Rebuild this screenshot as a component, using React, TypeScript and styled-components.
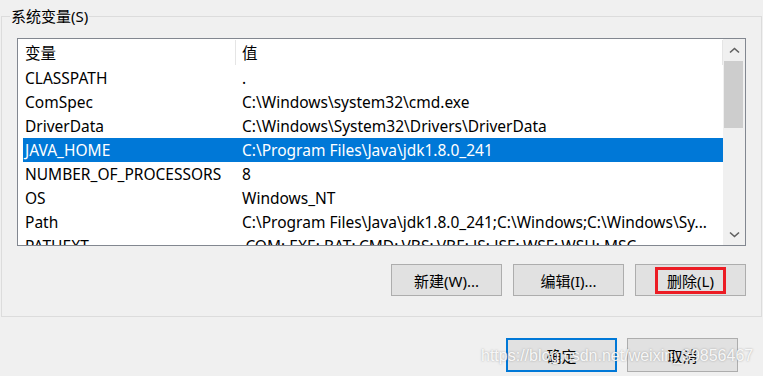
import styled, { createGlobalStyle } from 'styled-components';

const GlobalStyle = createGlobalStyle`
  html, body {
    margin: 0;
    padding: 0;
    background: #f0f0f0;
  }
  body {
    font-family: "Noto Sans", "Noto Sans CJK SC", sans-serif;
    color: #000;
  }
`;

const rows = [
  { name: 'CLASSPATH', value: '.' },
  { name: 'ComSpec', value: 'C:\\Windows\\system32\\cmd.exe' },
  { name: 'DriverData', value: 'C:\\Windows\\System32\\Drivers\\DriverData' },
  { name: 'JAVA_HOME', value: 'C:\\Program Files\\Java\\jdk1.8.0_241', selected: true },
  { name: 'NUMBER_OF_PROCESSORS', value: '8' },
  { name: 'OS', value: 'Windows_NT' },
  { name: 'Path', value: 'C:\\Program Files\\Java\\jdk1.8.0_241;C:\\Windows;C:\\Windows\\Sy...' },
  { name: 'PATHEXT', value: '.COM;.EXE;.BAT;.CMD;.VBS;.VBE;.JS;.JSE;.WSF;.WSH;.MSC' },
];

const Chevron = ({ down }: { down?: boolean }) => (
  <svg width="11" height="7" viewBox="0 0 11 7">
    <path
      d={down ? 'M1 1.5 L5.5 5.5 L10 1.5' : 'M1 5.5 L5.5 1.5 L10 5.5'}
      fill="none"
      stroke="#606060"
      strokeWidth="1.6"
    />
  </svg>
);

const App = () => (
  <>
    <GlobalStyle />
    <Window>
      <GroupBox>
        <Legend>系统变量(S)</Legend>
        <ListBox>
          <ListBody>
            <HeaderRow>
              <HeaderCell>变量</HeaderCell>
              <HeaderCell $second>值</HeaderCell>
            </HeaderRow>
            {rows.map((r) => (
              <Row key={r.name} $selected={!!r.selected}>
                <Cell>{r.name}</Cell>
                <Cell>{r.value}</Cell>
              </Row>
            ))}
          </ListBody>
          <Scrollbar>
            <ArrowButton>
              <Chevron />
            </ArrowButton>
            <Track>
              <Thumb />
            </Track>
            <ArrowButton>
              <Chevron down />
            </ArrowButton>
          </Scrollbar>
        </ListBox>
        <ButtonRow>
          <Button>新建(W)...</Button>
          <Button>编辑(I)...</Button>
          <Button>
            <Marked>删除(L)</Marked>
          </Button>
        </ButtonRow>
      </GroupBox>
      <Footer>
        <Button $primary $tall>确定</Button>
        <Button $tall>取消</Button>
      </Footer>
      <Watermark>https://blog.csdn.net/weixin_39856467</Watermark>
    </Window>
  </>
);

const Window = styled.div`
  position: relative;
  width: 763px;
  height: 376px;
  box-sizing: border-box;
  padding: 6px 1px 0 1px;
  overflow: hidden;
  background: #f0f0f0;
  font-size: 15.5px;
`;

const GroupBox = styled.fieldset`
  margin: 0;
  min-width: 0;
  width: 761px;
  box-sizing: border-box;
  border: 1px solid #dcdcdc;
  padding: 0 15px 20px 15px;
`;

const Legend = styled.legend`
  margin-left: -7px;
  padding: 0 1px;
  font-size: 15px;
  line-height: 20px;
`;

const ListBox = styled.div`
  margin-top: 12px;
  height: 208px;
  box-sizing: border-box;
  border: 1px solid #828790;
  background: #fff;
  display: flex;
  overflow: hidden;
`;

const ListBody = styled.div`
  flex: 1;
  min-width: 0;
  padding-left: 5px;
  overflow: hidden;
`;

const HeaderRow = styled.div`
  display: grid;
  grid-template-columns: 213px 1fr;
  height: 27px;
`;

const HeaderCell = styled.div<{ $second?: boolean }>`
  display: flex;
  align-items: center;
  margin: 1px 0;
  padding-left: ${(p) => (p.$second ? '6px' : '2px')};
  border-right: 1px solid #e5e5e5;
`;

const Row = styled.div<{ $selected: boolean }>`
  display: grid;
  grid-template-columns: 217px 1fr;
  height: 24px;
  align-items: center;
  background: ${(p) => (p.$selected ? '#0078d7' : 'transparent')};
  color: ${(p) => (p.$selected ? '#fff' : '#000')};
`;

const Cell = styled.div`
  padding-left: 2px;
  white-space: nowrap;
  overflow: hidden;
`;

const Scrollbar = styled.div`
  width: 22px;
  flex-shrink: 0;
  background: #f0f0f0;
  display: flex;
  flex-direction: column;
`;

const ArrowButton = styled.div`
  height: 22px;
  display: flex;
  align-items: center;
  justify-content: center;
`;

const Track = styled.div`
  flex: 1;
  padding: 0 2px 0 1px;
`;

const Thumb = styled.div`
  height: 67px;
  background: #cdcdcd;
`;

const ButtonRow = styled.div`
  margin-top: 18px;
  display: flex;
  justify-content: flex-end;
  gap: 11px;
`;

const Button = styled.div<{ $primary?: boolean; $tall?: boolean }>`
  width: 111px;
  height: ${(p) => (p.$tall ? '34px' : '32px')};
  box-sizing: border-box;
  background: #e1e1e1;
  border: ${(p) => (p.$primary ? '2px solid #0078d7' : '1px solid #adadad')};
  display: flex;
  align-items: center;
  justify-content: center;
  font-size: 15px;
  flex-shrink: 0;
`;

const Marked = styled.span`
  display: flex;
  align-items: center;
  height: 27px;
  margin-top: 1px;
  box-sizing: border-box;
  padding: 0 9px;
  border: 3px solid #ec1c24;
`;

const Footer = styled.div`
  margin-top: 21px;
  padding-right: 24px;
  display: flex;
  justify-content: flex-end;
  gap: 10px;
`;

const Watermark = styled.div`
  position: absolute;
  left: 481px;
  top: 347px;
  font-family: "Liberation Sans", Arial, sans-serif;
  font-size: 16px;
  color: rgba(255, 255, 255, 0.9);
  text-shadow: 0 0 2px rgba(90, 90, 90, 0.5);
  white-space: nowrap;
  pointer-events: none;
`;

export default App;
